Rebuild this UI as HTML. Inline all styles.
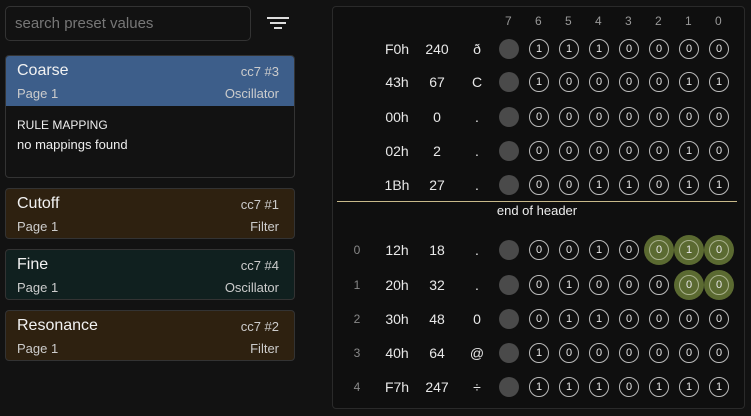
<!DOCTYPE html>
<html><head><meta charset="utf-8"><style>
*{box-sizing:border-box;margin:0;padding:0}
body{width:751px;height:416px;background:#121212;font-family:"Liberation Sans",sans-serif;color:#eee;position:relative;overflow:hidden}
.search{position:absolute;left:5px;top:6px;width:246px;height:35px;border:1px solid #333;border-radius:5px;color:#777;font-size:15px;padding:8px 9px}
.filt{position:absolute;left:267px;height:2px;background:#ddd}
.card{position:absolute;left:5px;width:290px;border:1px solid #333;border-radius:4px;overflow:hidden}
.hd{position:relative;height:50px}
.t{position:absolute;left:11px;top:6px;font-size:16px;color:#f2f2f2}
.cc{position:absolute;right:15px;top:8px;font-size:13px;color:#ccc}
.p{position:absolute;left:11px;top:30px;font-size:13px;color:#ccc}
.g2{position:absolute;right:15px;top:30px;font-size:13px;color:#ccc}
.br{background:#2e2110}.tl{background:#10201f}
.panel{position:absolute;left:332px;top:6px;width:413px;height:403px;border:1px solid #2a2a2a;border-radius:4px;background:#0f0f0f}
.r{position:absolute;left:0;width:751px;height:20px;font-size:14px;line-height:20px}
.r i{position:absolute;left:347px;width:20px;text-align:center;font-style:normal;color:#888;font-size:12px}
.r b{position:absolute;font-weight:normal;text-align:center;color:#e8e8e8}
.h{left:377px;width:40px}.d{left:417px;width:40px}.c{left:462px;width:30px}
.bits{position:absolute;left:499px;top:0;display:flex}
.bits s,.bits u{display:block;width:20px;height:20px;border-radius:50%;margin-right:10px;text-decoration:none;font-size:11px;line-height:18px;text-align:center}
.bits s{background:#4a4a4a}
.bits u{border:1px solid #bbb;color:#e8e8e8}
.bits u.g{background:#5b6a31;box-shadow:0 0 0 5px #5b6a31;border-color:#aab28e}
.hdr{position:absolute;top:14px;left:499px;display:flex;font-size:12px;color:#999}
.hdr span{width:30px;padding-left:0;text-align:left;text-indent:6px}
</style></head><body>
<div class="search">search preset values</div>
<div class="filt" style="top:17px;width:22px"></div>
<div class="filt" style="top:22px;left:270px;width:16px"></div>
<div class="filt" style="top:27px;left:274px;width:8px"></div>

<div class="card" style="top:55px;height:123px">
 <div class="hd" style="background:#3d5e8a;height:50px"><div class="t">Coarse</div><div class="cc">cc7 #3</div><div class="p">Page 1</div><div class="g2">Oscillator</div></div>
 <div style="position:absolute;left:11px;top:62px;font-size:12px;color:#eee">RULE MAPPING</div>
 <div style="position:absolute;left:11px;top:81px;font-size:13px;color:#eee">no mappings found</div>
</div>
<div class="card br" style="top:188px;height:51px"><div class="hd"><div class="t">Cutoff</div><div class="cc">cc7 #1</div><div class="p">Page 1</div><div class="g2">Filter</div></div></div>
<div class="card tl" style="top:249px;height:51px"><div class="hd"><div class="t">Fine</div><div class="cc">cc7 #4</div><div class="p">Page 1</div><div class="g2">Oscillator</div></div></div>
<div class="card br" style="top:310px;height:51px"><div class="hd"><div class="t">Resonance</div><div class="cc">cc7 #2</div><div class="p">Page 1</div><div class="g2">Filter</div></div></div>

<div class="panel"></div>
<div class="hdr"><span>7</span><span>6</span><span>5</span><span>4</span><span>3</span><span>2</span><span>1</span><span>0</span></div>

<div class="r" style="top:39px"><b class="h">F0h</b><b class="d">240</b><b class="c">ð</b><div class="bits"><s></s><u>1</u><u>1</u><u>1</u><u>0</u><u>0</u><u>0</u><u>0</u></div></div>
<div class="r" style="top:72px"><b class="h">43h</b><b class="d">67</b><b class="c">C</b><div class="bits"><s></s><u>1</u><u>0</u><u>0</u><u>0</u><u>0</u><u>1</u><u>1</u></div></div>
<div class="r" style="top:107px"><b class="h">00h</b><b class="d">0</b><b class="c">.</b><div class="bits"><s></s><u>0</u><u>0</u><u>0</u><u>0</u><u>0</u><u>0</u><u>0</u></div></div>
<div class="r" style="top:141px"><b class="h">02h</b><b class="d">2</b><b class="c">.</b><div class="bits"><s></s><u>0</u><u>0</u><u>0</u><u>0</u><u>0</u><u>1</u><u>0</u></div></div>
<div class="r" style="top:175px"><b class="h">1Bh</b><b class="d">27</b><b class="c">.</b><div class="bits"><s></s><u>0</u><u>0</u><u>1</u><u>1</u><u>0</u><u>1</u><u>1</u></div></div>

<div style="position:absolute;left:337px;top:201px;width:400px;height:1px;background:#c8b98a"></div>
<div style="position:absolute;left:437px;top:203px;width:200px;text-align:center;font-size:13px;color:#eee">end of header</div>

<div class="r" style="top:240px"><i>0</i><b class="h">12h</b><b class="d">18</b><b class="c">.</b><div class="bits"><s></s><u>0</u><u>0</u><u>1</u><u>0</u><u class="g">0</u><u class="g">1</u><u class="g">0</u></div></div>
<div class="r" style="top:275px"><i>1</i><b class="h">20h</b><b class="d">32</b><b class="c">.</b><div class="bits"><s></s><u>0</u><u>1</u><u>0</u><u>0</u><u>0</u><u class="g">0</u><u class="g">0</u></div></div>
<div class="r" style="top:309px"><i>2</i><b class="h">30h</b><b class="d">48</b><b class="c">0</b><div class="bits"><s></s><u>0</u><u>1</u><u>1</u><u>0</u><u>0</u><u>0</u><u>0</u></div></div>
<div class="r" style="top:343px"><i>3</i><b class="h">40h</b><b class="d">64</b><b class="c">@</b><div class="bits"><s></s><u>1</u><u>0</u><u>0</u><u>0</u><u>0</u><u>0</u><u>0</u></div></div>
<div class="r" style="top:377px"><i>4</i><b class="h">F7h</b><b class="d">247</b><b class="c">÷</b><div class="bits"><s></s><u>1</u><u>1</u><u>1</u><u>0</u><u>1</u><u>1</u><u>1</u></div></div>
</body></html>
